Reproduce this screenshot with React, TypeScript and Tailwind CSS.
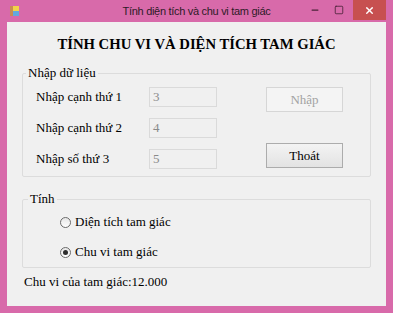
import { Minus, Square, X } from 'lucide-react';

const serif = { fontFamily: '"Liberation Serif", "Times New Roman", serif' };

function TextBox({ value }: { value: string }) {
  return (
    <div className="w-[68px] h-[20px] border border-[#dadada] bg-[#f0f0f0] px-[3px] text-[13px] leading-[18px] text-[#8a8a8a]">
      {value}
    </div>
  );
}

function Radio({ checked, label }: { checked?: boolean; label: string }) {
  return (
    <div className="flex items-center h-[20px] gap-[4px]">
      <span className="w-[11px] h-[11px] rounded-full border border-[#6b6b6b] bg-gradient-to-b from-[#e6e6e6] to-white flex items-center justify-center">
        {checked && <span className="w-[5px] h-[5px] rounded-full bg-[#2e2e2e]" />}
      </span>
      <span>{label}</span>
    </div>
  );
}

function App() {
  return (
    <div className="w-[393px] h-[313px] bg-[#d86aaa] flex flex-col" style={serif}>
      <div className="h-[22px] grid grid-cols-[1fr_auto_1fr] items-center">
        <div className="ml-[10px] w-[9px] h-[10px] flex">
          <div className="w-[3px] h-[10px] bg-[#c98d52]" />
          <div className="w-[6px] flex flex-col">
            <div className="h-[5px] bg-[#f1d34a]" />
            <div className="h-[5px] bg-[#63a9de]" />
          </div>
        </div>
        <div
          className="text-center text-[11px] tracking-[-0.3px] text-[#2e1a27]"
          style={{ fontFamily: '"Liberation Sans", Arial, sans-serif' }}
        >
          Tính diện tích và chu vi tam giác
        </div>
        <div className="flex items-start justify-end h-full">
          <div className="w-[24px] h-[20px] flex items-center justify-center text-[#4a2238]">
            <Minus size={10} strokeWidth={3} />
          </div>
          <div className="w-[24px] h-[20px] flex items-center justify-center text-[#4a2238]">
            <Square size={10} strokeWidth={2} />
          </div>
          <div className="ml-[2px] w-[33px] h-[20px] bg-[#c75050] flex items-center justify-center text-white mr-[7px]">
            <X size={11} strokeWidth={3} />
          </div>
        </div>
      </div>
      <div className="mx-[7px] h-[284px] bg-[#f0f0f0] text-black text-[13px] px-[15px] pt-[12px] flex flex-col">
        <h1 className="text-center font-bold text-[14.7px] leading-[20px] mb-[11px]">
          TÍNH CHU VI VÀ DIỆN TÍCH TAM GIÁC
        </h1>
        <fieldset className="border border-[#dcdcdc] rounded-[2px] h-[112px] px-[13px]">
          <legend className="px-[2px] ml-[-10px] leading-[16px]">Nhập dữ liệu</legend>
          <div className="flex">
            <div className="flex flex-col">
              <div className="flex items-center h-[31px]">
                <span className="w-[113px]">Nhập cạnh thứ 1</span>
                <TextBox value="3" />
              </div>
              <div className="flex items-center h-[31px]">
                <span className="w-[113px]">Nhập cạnh thứ 2</span>
                <TextBox value="4" />
              </div>
              <div className="flex items-center h-[31px]">
                <span className="w-[113px]">Nhập số thứ 3</span>
                <TextBox value="5" />
              </div>
            </div>
            <div className="ml-[49px] flex flex-col pt-[6px] gap-[31px]">
              <button className="w-[77px] h-[25px] border border-[#d6d6d6] bg-[#f4f4f4] text-[#a3a3a3] text-[13px]">
                Nhập
              </button>
              <button className="w-[77px] h-[25px] border border-[#acacac] bg-gradient-to-b from-[#f3f3f3] to-[#e3e3e3] text-black text-[13px]">
                Thoát
              </button>
            </div>
          </div>
        </fieldset>
        <fieldset className="mt-[14px] border border-[#dcdcdc] rounded-[2px] h-[77px] pl-[37px] pt-[5px]">
          <legend className="px-[2px] ml-[-32px] leading-[16px]">Tính</legend>
          <div className="flex flex-col gap-[10px]">
            <Radio label="Diện tích tam giác" />
            <Radio checked label="Chu vi tam giác" />
          </div>
        </fieldset>
        <div className="mt-[4px] ml-[2px] leading-[20px]">Chu vi của tam giác:12.000</div>
      </div>
    </div>
  );
}

export default App;
